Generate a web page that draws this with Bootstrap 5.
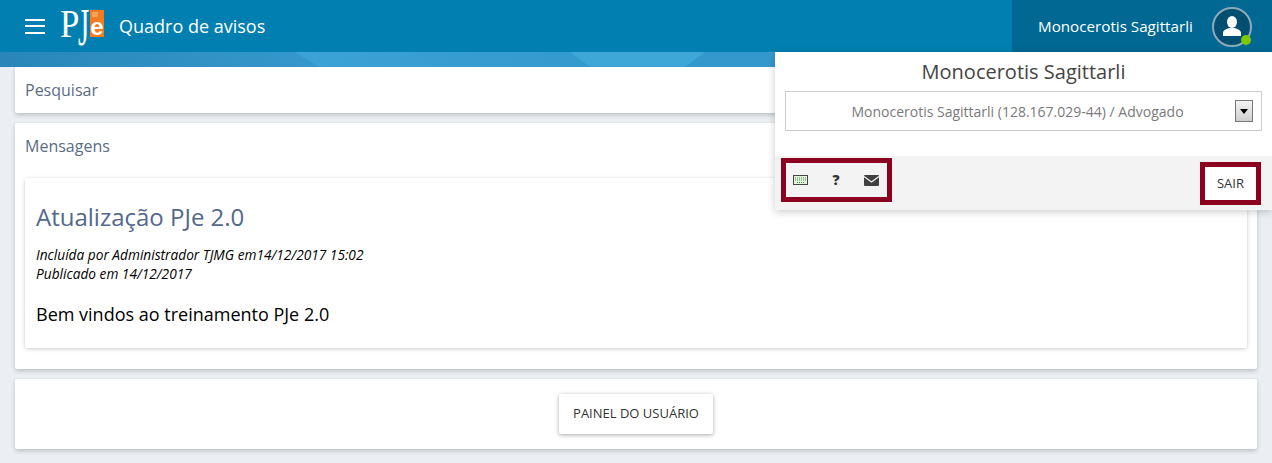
<!DOCTYPE html>
<html lang="pt-BR">
<head>
  <meta charset="UTF-8">
  <title>Quadro de avisos</title>
  <link rel="stylesheet" href="https://cdn.jsdelivr.net/npm/bootstrap@5.3.0/dist/css/bootstrap.min.css">
  <style>
    html, body { height: 100%; }
    body {
      font-family: "Open Sans", sans-serif;
      background-color: #ebeff3;
      color: #333;
      overflow: hidden;
    }
    .pje-topbar { height: 52px; background-color: #007fb0; color: #fff; }
    .pje-burger { width: 20px; margin-left: 25px; margin-right: 15px; }
    .pje-burger span { display: block; height: 2px; background: #fff; margin-bottom: 4.5px; }
    .pje-burger span:last-child { margin-bottom: 0; }
    .pje-logo { width: 44px; height: 52px; position: relative; }
    .pje-logo-p, .pje-logo-j { position: absolute; font-family: "Liberation Serif", serif; font-size: 41px; line-height: 41px; color: #fff; }
    .pje-logo-p { left: 0; top: 3px; transform-origin: 0 0; transform: scaleX(.85); }
    .pje-logo-j { left: 18px; top: 3px; transform-origin: 0 7.4px; transform: scale(.7, 1.3); }
    .pje-logo-e {
      position: absolute; left: 30px; top: 10px; width: 14px; height: 27px; background-color: #f47b20;
      background-image: linear-gradient(#f9a25e, #f9a25e);
      background-size: 6px 5px; background-position: 2px 2px; background-repeat: no-repeat;
      color: #fff; font-family: "Liberation Sans", sans-serif; font-weight: 700; font-size: 24px;
      line-height: 33px; text-align: center;
    }
    .pje-title { font-size: 18px; margin-left: 15px; }
    .pje-user-cell { width: 260px; background-color: #006892; }
    .pje-user-name { font-size: 15.2px; margin-left: 26px; }
    .pje-avatar {
      width: 40px; height: 40px; border: 2px solid #8fa9b8; border-radius: 50%;
      background: #024f72; margin-right: 20px; margin-top: 1px; position: relative;
    }
    .pje-dot { position: absolute; width: 10px; height: 10px; right: -1px; bottom: 0; border-radius: 50%; background: #7fc800; }
    .pje-strip { height: 15px; background-color: #3fa6d8; }
    .pje-strip svg { display: block; }
    .pje-main { padding: 0 15px; }
    .pje-box { background: #fff; border-radius: 2px; box-shadow: 0 2px 4px rgba(0,0,0,.2); margin-bottom: 10px; }
    .pje-search { height: 46px; padding: 0 10px; display: flex; align-items: center; color: #5a6d85; font-size: 16px; }
    .pje-msgs { height: 246px; padding: 0 10px; }
    .pje-msgs-head { height: 45px; margin-bottom: 10px; display: flex; align-items: center; color: #5a6d85; font-size: 16px; }
    .pje-post { height: 170px; padding: 23px 11px 0; border-radius: 2px; box-shadow: 0 1px 4px rgba(0,0,0,.2); color: #000; }
    .pje-post-title { color: #53688a; font-size: 24px; line-height: 32px; margin: 0 0 12px; font-weight: 400; }
    .pje-post-meta { font-size: 13.7px; font-style: italic; line-height: 19px; margin-bottom: 19px; }
    .pje-post-body { font-size: 18px; line-height: 24px; margin: 0; }
    .pje-footer-box { height: 70px; display: flex; align-items: center; justify-content: center; margin-bottom: 0; }
    .pje-panel-btn { height: 40px; width: 154px; border: 0; background: #fff; color: #333; font-size: 13px; border-radius: 2px; box-shadow: 0 1px 4px rgba(0,0,0,.35); padding: 0; }
    .pje-menu {
      position: absolute; top: 52px; left: 775px; width: 497px; height: 158px;
      background: #fff; box-shadow: 0 2px 8px rgba(0,0,0,.2); z-index: 5;
    }
    .pje-menu-name { height: 39px; font-size: 20px; color: #444; display: flex; align-items: center; justify-content: center; }
    .pje-profile {
      height: 40px; margin: 0 0 0 10px; width: 477px; border: 1px solid #ccc; color: #7a7a7a; padding-right: 12px;
      font-size: 14px; display: flex; align-items: center; justify-content: center; position: relative;
    }
    .pje-arrow {
      position: absolute; right: 8px; top: 8px; width: 18px; height: 22px; border: 1px solid #777;
      background: linear-gradient(#f4f4f4, #cfcfcf); display: flex; align-items: center; justify-content: center;
    }
    .pje-arrow::after { content: ""; border: 4px solid transparent; border-top: 5px solid #000; border-bottom: 0; }
    .pje-menu-foot { height: 54px; margin-top: 25px; background: #f3f3f3; position: relative; }
    .pje-tools { position: absolute; left: 6px; top: 2px; width: 111px; height: 44px; border: 5px solid #8c0020; padding-left: 7px; }
    .pje-help { width: 16px; margin: 0 20px; text-align: center; font-size: 14px; font-weight: 800; color: #333; line-height: 1; }
    .pje-sair { position: absolute; right: 11px; top: 6px; width: 61px; height: 43px; border: 5px solid #8c0020; background: #fff; font-size: 13px; color: #333; display: flex; align-items: center; justify-content: center; }
  </style>
</head>
<body>
  <div class="pje-topbar d-flex align-items-center">
    <div class="pje-burger"><span></span><span></span><span></span></div>
    <div class="pje-logo">
      <span class="pje-logo-p">P</span><span class="pje-logo-j">J</span><span class="pje-logo-e">e</span>
    </div>
    <div class="pje-title">Quadro de avisos</div>
    <div class="pje-user-cell ms-auto h-100 d-flex align-items-center justify-content-between">
      <span class="pje-user-name">Monocerotis Sagittarli</span>
      <div class="pje-avatar d-flex align-items-center justify-content-center">
        <svg width="18" height="21" viewBox="0 0 18 21"><ellipse cx="9" cy="6" rx="5" ry="6" fill="#fff"/><path d="M0 20 v-3 c0-3 4-4 6-5 h6 c2 1 6 2 6 5 v3z" fill="#fff"/></svg>
        <span class="pje-dot"></span>
      </div>
    </div>
  </div>
  <div class="pje-strip">
    <svg width="1272" height="15" viewBox="0 0 1272 15">
      <defs>
        <linearGradient id="stripA" x1="0" x2="1"><stop offset="0" stop-color="#2a86b8"/><stop offset="1" stop-color="#3598cc"/></linearGradient>
        <linearGradient id="stripB" x1="0" x2="1"><stop offset="0" stop-color="#3ca3d6"/><stop offset="1" stop-color="#3499cd"/></linearGradient>
      </defs>
      <polygon points="0,0 295,0 320,15 0,15" fill="url(#stripA)"/>
      <polygon points="295,0 570,0 590,15 320,15" fill="url(#stripB)"/>
      <polygon points="705,0 1272,0 1272,15 685,15" fill="#3598cc"/>
    </svg>
  </div>

  <div class="pje-main">
    <div class="pje-box pje-search">Pesquisar</div>
    <div class="pje-box pje-msgs">
      <div class="pje-msgs-head">Mensagens</div>
      <div class="pje-post">
        <h2 class="pje-post-title">Atualização PJe 2.0</h2>
        <div class="pje-post-meta">Incluída por Administrador TJMG em14/12/2017 15:02<br>Publicado em 14/12/2017</div>
        <p class="pje-post-body">Bem vindos ao treinamento PJe 2.0</p>
      </div>
    </div>
    <div class="pje-box pje-footer-box">
      <button type="button" class="pje-panel-btn">PAINEL DO USUÁRIO</button>
    </div>
  </div>

  <div class="pje-menu">
    <div class="pje-menu-name">Monocerotis Sagittarli</div>
    <div class="pje-profile">Monocerotis Sagittarli (128.167.029-44) / Advogado<span class="pje-arrow"></span></div>
    <div class="pje-menu-foot">
      <div class="pje-tools d-flex align-items-center">
        <svg width="15" height="10" viewBox="0 0 15 10"><rect x=".5" y=".5" width="14" height="9" fill="#e6f3e0" stroke="#444"/><path d="M2 3h11M2 5h11M4 7.5h7" stroke="#3a8a3a" stroke-dasharray="1 1"/></svg>
        <span class="pje-help">?</span>
        <svg width="15" height="11" viewBox="0 0 15 11"><rect width="15" height="11" rx="1" fill="#404040"/><path d="M0 1.5 L7.5 7 L15 1.5" fill="none" stroke="#f3f3f3" stroke-width="1.2"/></svg>
      </div>
      <div class="pje-sair">SAIR</div>
    </div>
  </div>
  <script src="https://cdn.jsdelivr.net/npm/bootstrap@5.3.0/dist/js/bootstrap.bundle.min.js"></script>
</body>
</html>
